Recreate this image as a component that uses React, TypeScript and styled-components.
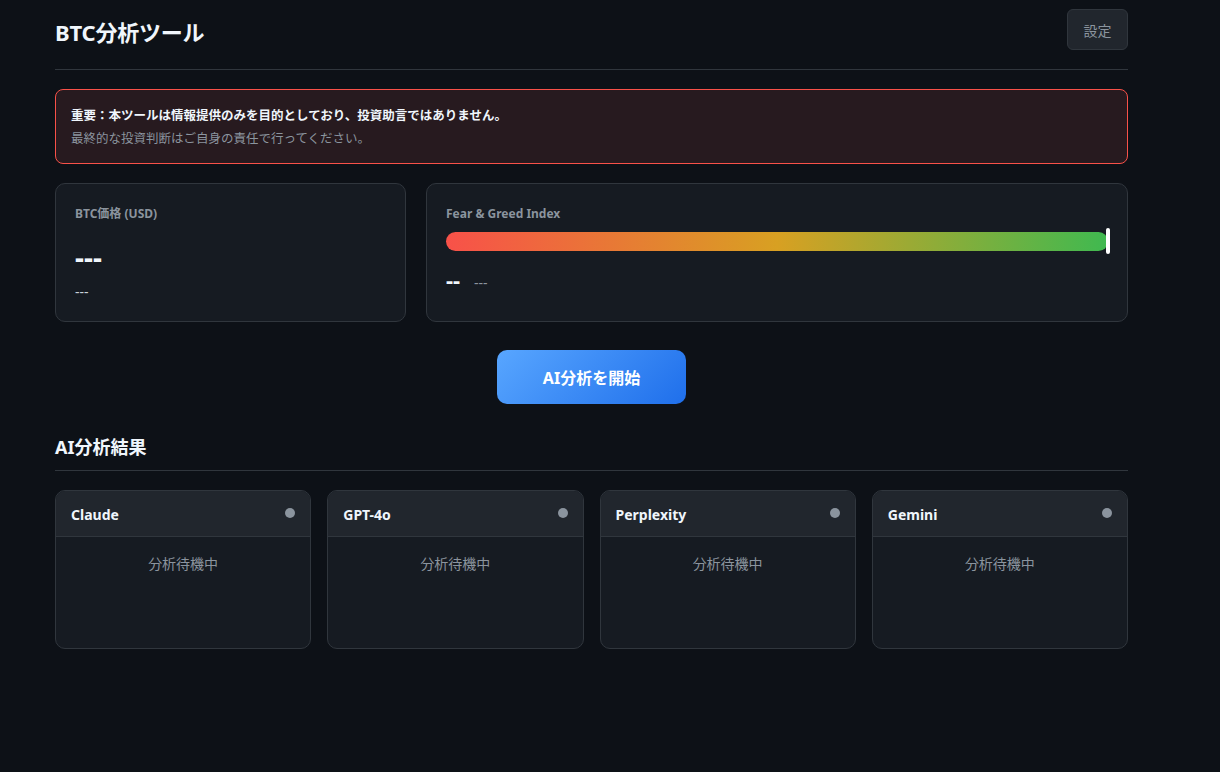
import React from "react";
import styled, { createGlobalStyle } from "styled-components";

const Global = createGlobalStyle`
  html, body { margin: 0; padding: 0; background: #0d1117; }
  body {
    font-family: "Noto Sans", "Noto Sans CJK JP", sans-serif;
    color: #e6edf3;
    min-height: 772px;
  }
`;

const Page = styled.div`
  width: 1073px;
  padding: 0 0 40px 55px;
`;

const Header = styled.header`
  display: flex;
  align-items: center;
  justify-content: space-between;
  padding-top: 8px;
  border-bottom: 1px solid #30363d;
  box-sizing: border-box;
  height: 70px;
`;

const Title = styled.h1`
  margin: 0;
  font-size: 22px;
  font-weight: 700;
  color: #f0f6fc;
  margin-top: -16px;
  letter-spacing: -0.2px;
`;

const SettingsButton = styled.button`
  width: 61px;
  height: 41px;
  margin-top: -18px;
  background: #21262d;
  border: 1px solid #30363d;
  border-radius: 6px;
  color: #8b949e;
  font-family: inherit;
  font-size: 14px;
  cursor: pointer;
`;

const Alert = styled.div`
  margin-top: 19px;
  border: 1px solid #f85149;
  background: #271a1f;
  border-radius: 8px;
  padding: 16px 15px 15px;
  display: flex;
  flex-direction: column;
  gap: 4px;
`;

const AlertStrong = styled.div`
  font-size: 12.5px;
  font-weight: 700;
  color: #f0f6fc;
  line-height: 19px;
`;

const AlertSub = styled.div`
  font-size: 12.5px;
  color: #8b949e;
  line-height: 19px;
`;

const Stats = styled.div`
  display: grid;
  grid-template-columns: 1fr 2fr;
  gap: 20px;
  margin-top: 19px;
`;

const Card = styled.div`
  background: #161b22;
  border: 1px solid #30363d;
  border-radius: 10px;
  height: 139px;
  box-sizing: border-box;
  padding: 20px 19px;
`;

const Label = styled.div`
  font-size: 12px;
  font-weight: 700;
  color: #8b949e;
  line-height: 20px;
`;

const BigValue = styled.div`
  font-size: 28px;
  font-weight: 700;
  color: #f0f6fc;
  margin-top: 16px;
  line-height: 34px;
`;

const SubValue = styled.div`
  font-size: 14px;
  color: #c9d1d9;
  margin-top: 8px;
  line-height: 20px;
`;

const BarWrap = styled.div`
  position: relative;
  margin-top: 4px;
  height: 26px;
  display: flex;
  align-items: center;
`;

const Bar = styled.div`
  height: 19px;
  width: 100%;
  border-radius: 10px;
  background: linear-gradient(90deg, #f85149 0%, #d8a022 50%, #3fb950 100%);
`;

const Marker = styled.div`
  position: absolute;
  top: 0;
  width: 4px;
  height: 26px;
  background: #ffffff;
  border-radius: 2px;
  transform: translateX(-2px);
`;

const FearRow = styled.div`
  display: flex;
  align-items: baseline;
  gap: 14px;
  margin-top: 10px;
`;

const FearValue = styled.span`
  font-size: 22px;
  font-weight: 700;
  color: #f0f6fc;
`;

const FearLabel = styled.span`
  font-size: 14px;
  color: #8b949e;
`;

const ActionRow = styled.div`
  display: flex;
  justify-content: center;
  margin-top: 28px;
`;

const PrimaryButton = styled.button`
  width: 189px;
  height: 54px;
  border: none;
  border-radius: 10px;
  background: linear-gradient(135deg, #58a6ff 0%, #1f6feb 100%);
  color: #ffffff;
  font-family: inherit;
  font-size: 16px;
  font-weight: 700;
  cursor: pointer;
`;

const SectionTitle = styled.h2`
  margin: 30px 0 0;
  font-size: 18px;
  font-weight: 700;
  color: #f0f6fc;
  padding-bottom: 10px;
  border-bottom: 1px solid #30363d;
  line-height: 26px;
`;

const ModelGrid = styled.div`
  display: grid;
  grid-template-columns: repeat(4, 1fr);
  gap: 16px;
  margin-top: 19px;
`;

const ModelCard = styled.div`
  background: #161b22;
  border: 1px solid #30363d;
  border-radius: 10px;
  height: 159px;
  box-sizing: border-box;
  overflow: hidden;
  display: flex;
  flex-direction: column;
`;

const ModelHeader = styled.div`
  height: 46px;
  box-sizing: border-box;
  background: #21262d;
  border-bottom: 1px solid #30363d;
  display: flex;
  align-items: center;
  justify-content: space-between;
  padding: 0 15px;
`;

const ModelName = styled.span`
  font-size: 14px;
  font-weight: 700;
  color: #f0f6fc;
  margin-top: 1px;
`;

const Dot = styled.span<{ $color: string }>`
  width: 10px;
  height: 10px;
  border-radius: 50%;
  background: ${(p) => p.$color};
  margin-top: -1px;
`;

const ModelBody = styled.div`
  flex: 1;
  text-align: center;
  padding-top: 16px;
  font-size: 14px;
  color: #8b949e;
  line-height: 22px;
`;

const models = ["Claude", "GPT-4o", "Perplexity", "Gemini"];

export default function App() {
  return (
    <>
      <Global />
      <Page>
        <Header>
          <Title>BTC分析ツール</Title>
          <SettingsButton>設定</SettingsButton>
        </Header>
        <Alert>
          <AlertStrong>重要：本ツールは情報提供のみを目的としており、投資助言ではありません。</AlertStrong>
          <AlertSub>最終的な投資判断はご自身の責任で行ってください。</AlertSub>
        </Alert>
        <Stats>
          <Card>
            <Label>BTC価格 (USD)</Label>
            <BigValue>---</BigValue>
            <SubValue>---</SubValue>
          </Card>
          <Card>
            <Label>Fear &amp; Greed Index</Label>
            <BarWrap>
              <Bar />
              <Marker style={{ left: "100%" }} />
            </BarWrap>
            <FearRow>
              <FearValue>--</FearValue>
              <FearLabel>---</FearLabel>
            </FearRow>
          </Card>
        </Stats>
        <ActionRow>
          <PrimaryButton>AI分析を開始</PrimaryButton>
        </ActionRow>
        <SectionTitle>AI分析結果</SectionTitle>
        <ModelGrid>
          {models.map((m) => (
            <ModelCard key={m}>
              <ModelHeader>
                <ModelName>{m}</ModelName>
                <Dot $color="#8b949e" />
              </ModelHeader>
              <ModelBody>分析待機中</ModelBody>
            </ModelCard>
          ))}
        </ModelGrid>
      </Page>
    </>
  );
}
